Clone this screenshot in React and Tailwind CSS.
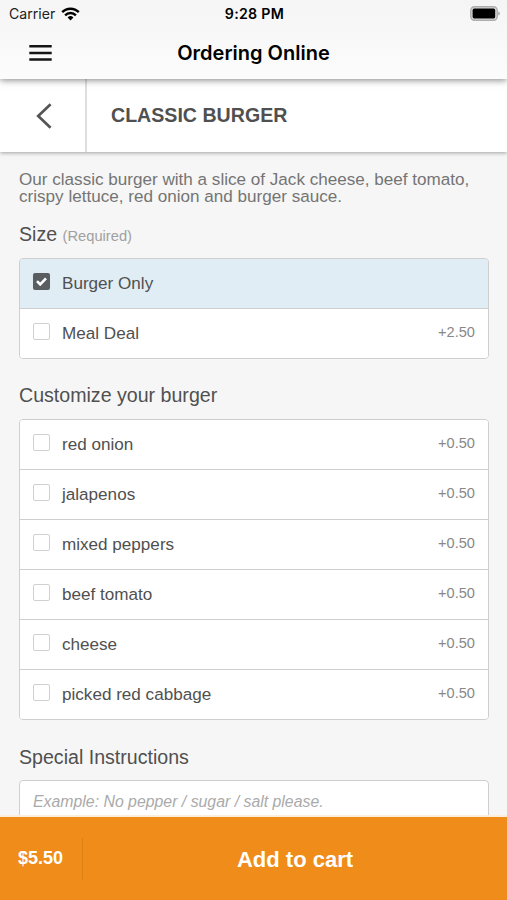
import { useState } from "react";

const sizes = [
  { id: "burger", label: "Burger Only", price: "" },
  { id: "meal", label: "Meal Deal", price: "+2.50" },
];

const extras = [
  { id: "onion", label: "red onion", price: "+0.50" },
  { id: "jalapenos", label: "jalapenos", price: "+0.50" },
  { id: "peppers", label: "mixed peppers", price: "+0.50" },
  { id: "tomato", label: "beef tomato", price: "+0.50" },
  { id: "cheese", label: "cheese", price: "+0.50" },
  { id: "cabbage", label: "picked red cabbage", price: "+0.50" },
];

function StatusBar() {
  return (
    <div className="grid h-[27px] grid-cols-3 items-center pr-[7px] pl-[9px] font-[Inter,sans-serif] text-black">
      <div className="flex items-center gap-[6px]">
        <span className="pt-[2px] text-[14.1px] leading-none text-[#222]">Carrier</span>
        <svg width="19" height="14" viewBox="0 0 19 14" fill="none" stroke="currentColor" strokeWidth="2.4">
          <path d="M1.2 5.2a11.7 11.7 0 0 1 16.6 0" />
          <path d="M4.1 8.3a7.6 7.6 0 0 1 10.8 0" />
          <path d="M6.6 10.4a4.1 4.1 0 0 1 5.8 0L9.5 13.4z" fill="currentColor" stroke="none" />
        </svg>
      </div>
      <span className="pt-px text-center text-[14.2px] leading-none font-semibold tracking-[0.3px] whitespace-nowrap">9:28 PM</span>
      <svg className="justify-self-end" width="30" height="15" viewBox="0 0 30 15">
        <rect x="0.8" y="0.8" width="26.4" height="13.4" rx="3.6" fill="#dcdcdc" stroke="#adadad" strokeWidth="1.4" />
        <rect x="2.6" y="2.6" width="22.6" height="9.8" rx="1.6" fill="#000" />
        <path d="M28.2 5.4q1.8.6 1.8 2.1t-1.8 2.1z" fill="#adadad" />
      </svg>
    </div>
  );
}

function Checkbox({ checked }) {
  if (checked) {
    return (
      <span className="flex size-[17px] items-center justify-center rounded-[2px] bg-[#5b5e61]">
        <svg width="11" height="9" viewBox="0 0 11 9" fill="none" stroke="#fff" strokeWidth="2.6">
          <path d="M1 4.2l3.2 3.2L10 1.4" />
        </svg>
      </span>
    );
  }
  return <span className="block size-[17px] rounded-[2px] border border-[#d0d0d0] bg-white" />;
}

function OptionList({ options, selected, onToggle }) {
  return (
    <div className="divide-y divide-[#cfcfcf] overflow-hidden rounded-[4px] border border-[#cfcfcf]">
      {options.map((option) => {
        const checked = selected.includes(option.id);
        return (
          <button
            key={option.id}
            type="button"
            onClick={() => onToggle(option.id)}
            className={`flex h-[50px] w-full items-center pr-[13px] pl-[13px] text-left last:h-[49px] ${checked ? "bg-[#e0edf5]" : "bg-white"}`}
          >
            <span className="pb-[5px]">
              <Checkbox checked={checked} />
            </span>
            <span className="ml-[12px] flex-1 pt-px text-[17.1px] text-[#505050]">{option.label}</span>
            <span className="pb-[2px] text-[14.6px] text-[#888]">{option.price}</span>
          </button>
        );
      })}
    </div>
  );
}

export default function App() {
  const [size, setSize] = useState(["burger"]);
  const [toppings, setToppings] = useState([]);

  function toggleTopping(id) {
    setToppings((prev) => (prev.includes(id) ? prev.filter((item) => item !== id) : [...prev, id]));
  }

  return (
    <main className="flex h-[900px] w-[507px] flex-col overflow-hidden bg-[#f6f6f6] font-['Liberation_Sans',Arial,sans-serif]">
      <header className="z-20 shrink-0 bg-linear-to-b from-[#f5f5f5] to-[#fcfcfc] shadow-[0_1px_7px_rgba(0,0,0,0.5)]">
        <StatusBar />
        <div className="grid h-[52px] grid-cols-[1fr_auto_1fr] items-center px-[29px]">
          <button type="button" aria-label="Menu" className="w-[23px]">
            <svg width="23" height="18" viewBox="0 0 23 18" fill="none" stroke="#151515" strokeWidth="2.5">
              <path d="M0.3 2.2h22.4M0.3 8.9h22.4M0.3 15.5h22.4" />
            </svg>
          </button>
          <h1 className="font-[Inter,sans-serif] text-[20px] font-semibold text-black">Ordering Online</h1>
        </div>
      </header>

      <div className="z-10 flex h-[73px] shrink-0 items-center bg-white shadow-[0_1px_4px_rgba(0,0,0,0.35)]">
        <button type="button" aria-label="Back" className="flex h-full w-[87px] items-center justify-center border-r-2 border-[#dedede] pl-[2px]">
          <svg width="16" height="26" viewBox="0 0 16 26" fill="none" stroke="#555" strokeWidth="2.7">
            <path d="M14.6 1.2L2.2 13l12.4 11.8" />
          </svg>
        </button>
        <h2 className="pl-[24px] text-[19.6px] font-bold text-[#505050]">CLASSIC BURGER</h2>
      </div>

      <section className="min-h-0 flex-1 overflow-hidden pt-[19px] pr-[18px] pl-[19px]">
        <p className="text-[17.1px] leading-[17px] text-[#747474]">
          Our classic burger with a slice of Jack cheese, beef tomato,
          <br />
          crispy lettuce, red onion and burger sauce.
        </p>

        <h3 className="mt-[15px] mb-[8px] text-[19.6px] leading-[28px] text-[#505050]">
          Size <span className="text-[14.7px] text-[#a0a0a0]">(Required)</span>
        </h3>
        <OptionList options={sizes} selected={size} onToggle={(id) => setSize([id])} />

        <h3 className="mt-[22px] mb-[10px] text-[19.6px] leading-[28px] text-[#505050]">Customize your burger</h3>
        <OptionList options={extras} selected={toppings} onToggle={toggleTopping} />

        <h3 className="mt-[23px] mb-[9px] text-[19.6px] leading-[28px] text-[#505050]">Special Instructions</h3>
        <textarea
          placeholder="Example: No pepper / sugar / salt please."
          className="block h-[90px] w-full resize-none rounded-[4px] border border-[#cfcfcf] bg-white px-[13px] py-[11px] text-[15.85px] leading-[20px] italic placeholder:text-[#aaa]"
        />
      </section>

      <footer className="z-10 flex h-[85px] shrink-0 items-center border-t-2 border-[#fbeedd] bg-[#ef8c1a] text-white">
        <div className="flex h-[42px] w-[83px] items-center border-r border-[#de8013] pl-[18px] text-[18px] font-bold">$5.50</div>
        <button type="button" className="flex-1 pt-px text-center text-[22px] font-bold">Add to cart</button>
      </footer>
    </main>
  );
}
